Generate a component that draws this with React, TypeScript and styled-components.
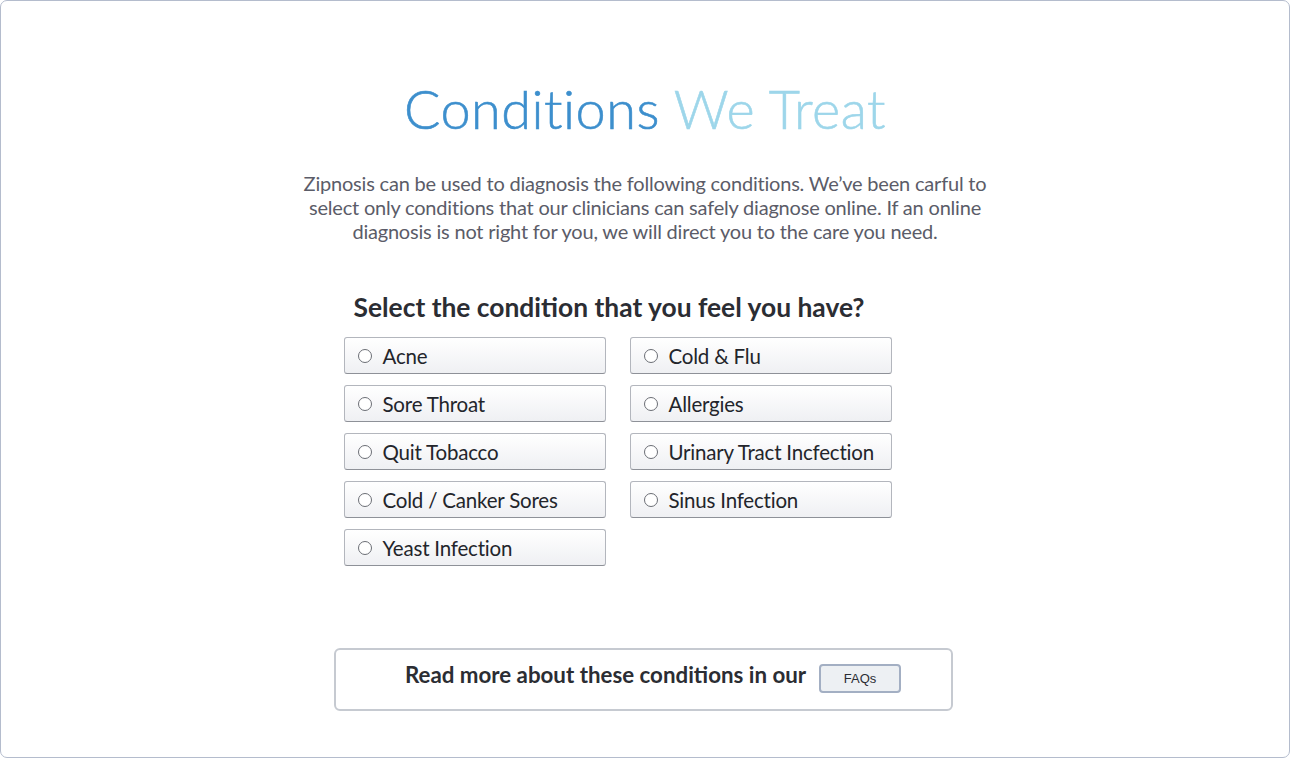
import React from "react";
import styled, { createGlobalStyle } from "styled-components";

const Global = createGlobalStyle`
  html, body { margin: 0; padding: 0; background: #ffffff; }
  body { font-family: Lato, "Liberation Sans", sans-serif; }
  * { box-sizing: border-box; }
`;

const Frame = styled.div`
  width: 1290px;
  height: 758px;
  border: 1px solid #b4bccd;
  border-radius: 7px;
  background: #fff;
  display: flex;
  flex-direction: column;
  align-items: center;
  padding-top: 76px;
`;

const Title = styled.h1`
  margin: 0;
  font-family: Lato, "Liberation Sans", sans-serif;
  font-weight: 300;
  font-size: 54px;
  line-height: 64px;
  letter-spacing: 0.5px;
  color: #3d8fcd;
  text-align: center;
  -webkit-text-stroke: 0.6px currentColor;
`;

const Accent = styled.span`
  color: #9dd6ea;
`;

const Intro = styled.p`
  margin: 30px 0 0;
  width: 700px;
  font-family: Lato, "Liberation Sans", sans-serif;
  font-size: 20px;
  line-height: 24px;
  color: #5b5c68;
  text-align: center;
  letter-spacing: -0.2px;
`;

const Block = styled.div`
  width: 619px;
  margin-top: 49px;
  margin-left: -4px;
  display: flex;
  flex-direction: column;
`;

const Question = styled.h2`
  margin: 0 0 0 20px;
  font-family: Lato, "Liberation Sans", sans-serif;
  font-weight: 700;
  font-size: 26.4px;
  line-height: 30px;
  color: #2b2d33;
`;

const Grid = styled.div`
  margin: 15px 0 0 10px;
  display: grid;
  grid-template-columns: 262px 262px;
  column-gap: 24px;
  row-gap: 11px;
`;

const Option = styled.label`
  height: 37px;
  display: flex;
  align-items: center;
  gap: 11px;
  padding-left: 13px;
  border: 1px solid #b3b6bd;
  border-bottom-color: #8e9198;
  border-radius: 3px;
  background: linear-gradient(#ffffff, #eff0f3);
  font-family: Lato, "Liberation Sans", sans-serif;
  font-size: 20.5px;
  color: #23252b;
  cursor: pointer;
  letter-spacing: -0.2px;
`;

const Radio = styled.span`
  width: 14px;
  height: 14px;
  border-radius: 50%;
  border: 1px solid #6b6e75;
  background: #fff;
  flex: none;
`;

const Footer = styled.div`
  width: 619px;
  height: 63px;
  margin-top: 82px;
  margin-left: -4px;
  border: 2px solid #c6cad1;
  border-radius: 6px;
  display: flex;
  align-items: center;
  justify-content: center;
  gap: 13px;
  padding-left: 20px;
`;

const FooterText = styled.span`
  margin-bottom: 10px;
  font-family: Lato, "Liberation Sans", sans-serif;
  font-weight: 700;
  font-size: 22.3px;
  color: #2b2d33;
`;

const FaqButton = styled.button`
  width: 82px;
  height: 29px;
  margin-bottom: 3px;
  border: 2px solid #a3afc3;
  border-radius: 4px;
  background: #edf0f3;
  font-family: "Liberation Sans", Arial, sans-serif;
  font-size: 13px;
  color: #2b2d33;
  padding: 0;
`;

const conditions = [
  "Acne",
  "Cold & Flu",
  "Sore Throat",
  "Allergies",
  "Quit Tobacco",
  "Urinary Tract Incfection",
  "Cold / Canker Sores",
  "Sinus Infection",
  "Yeast Infection",
];

export default function App() {
  return (
    <>
      <Global />
      <Frame>
        <Title>
          Conditions <Accent>We Treat</Accent>
        </Title>
        <Intro>
          Zipnosis can be used to diagnosis the following conditions. We’ve been carful to select only
          conditions that our clinicians can safely diagnose online. If an online diagnosis is not right
          for you, we will direct you to the care you need.
        </Intro>
        <Block>
          <Question>Select the condition that you feel you have?</Question>
          <Grid>
            {conditions.map((c) => (
              <Option key={c}>
                <Radio />
                {c}
              </Option>
            ))}
          </Grid>
        </Block>
        <Footer>
          <FooterText>Read more about these conditions in our</FooterText>
          <FaqButton>FAQs</FaqButton>
        </Footer>
      </Frame>
    </>
  );
}
